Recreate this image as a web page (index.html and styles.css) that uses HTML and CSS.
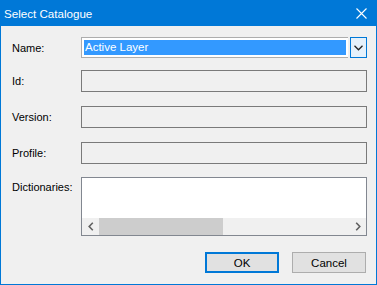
FILE: index.html
```html
<!DOCTYPE html>
<html lang="en">
<head>
    <meta charset="UTF-8">
    <title>Select Catalogue</title>
    <link rel="stylesheet" href="styles.css">
</head>
<body>
    <div class="window">
        <div class="titlebar">
            <span class="title">Select Catalogue</span>
            <svg class="close" width="11" height="11" viewBox="0 0 11 11">
                <path d="M0.5 0.5 L10.5 10.5 M10.5 0.5 L0.5 10.5" stroke="#fff" stroke-width="1.1" fill="none"/>
            </svg>
        </div>
        <div class="content">
            <div class="row row-name">
                <label>Name:</label>
                <div class="combo">
                    <div class="combo-text"><span class="selected">Active Layer</span></div>
                    <div class="combo-btn">
                        <svg width="9" height="6" viewBox="0 0 9 6">
                            <path d="M0.5 0.8 L4.5 4.8 L8.5 0.8" stroke="#222" stroke-width="1.3" fill="none"/>
                        </svg>
                    </div>
                </div>
            </div>
            <div class="row">
                <label>Id:</label>
                <div class="field"></div>
            </div>
            <div class="row">
                <label>Version:</label>
                <div class="field"></div>
            </div>
            <div class="row">
                <label>Profile:</label>
                <div class="field"></div>
            </div>
            <div class="row row-dict">
                <label>Dictionaries:</label>
                <div class="listbox">
                    <div class="list-area"></div>
                    <div class="hscroll">
                        <div class="arrow">
                            <svg width="6" height="9" viewBox="0 0 6 9">
                                <path d="M4.8 0.8 L1.2 4.5 L4.8 8.2" stroke="#606060" stroke-width="1.6" fill="none"/>
                            </svg>
                        </div>
                        <div class="track"><div class="thumb"></div></div>
                        <div class="arrow">
                            <svg width="6" height="9" viewBox="0 0 6 9">
                                <path d="M1.2 0.8 L4.8 4.5 L1.2 8.2" stroke="#606060" stroke-width="1.6" fill="none"/>
                            </svg>
                        </div>
                    </div>
                </div>
            </div>
            <div class="buttons">
                <button class="default">OK</button>
                <button>Cancel</button>
            </div>
        </div>
    </div>
</body>
</html>
```

FILE: styles.css
```css
body {
    margin: 0;
    font-family: "Liberation Sans", Arial, sans-serif;
    font-size: 11px;
    color: #000;
    background: #f0f0f0;
}
.window {
    width: 377px;
    height: 285px;
    box-sizing: border-box;
    border: 1px solid #0078d7;
    border-top: none;
    background: #f0f0f0;
}
.titlebar {
    height: 26px;
    background: #0078d7;
    display: flex;
    align-items: center;
    justify-content: space-between;
    padding: 0 10px 0 4px;
    margin: 0 -1px;
}
.title {
    color: #fff;
    font-size: 11.6px;
    margin-top: 1px;
}
.close {
    display: block;
}
.content {
    padding: 11px 9px 0 11px;
    display: flex;
    flex-direction: column;
}
.row {
    display: grid;
    grid-template-columns: 69px 1fr;
    align-items: center;
    height: 22px;
    margin-bottom: 14px;
}
.row-name {
    height: 21px;
    margin-bottom: 12px;
}
.row-dict {
    height: 59px;
    align-items: start;
    margin-top: -1px;
    margin-bottom: 16px;
}
.row-dict label {
    padding-top: 4px;
}
.combo {
    display: flex;
    height: 21px;
}
.combo-text {
    flex: 1;
    border: 1px solid #adadad;
    border-right: none;
    background: #fff;
    padding: 2px 2px 2px 2px;
    display: flex;
}
.selected {
    flex: 1;
    background: #3399ff;
    color: #fff;
    font-size: 11.5px;
    line-height: 15px;
    padding-left: 1px;
}
.combo-btn {
    width: 17px;
    box-sizing: border-box;
    border: 1px solid #0078d7;
    background: #e5f1fb;
    display: flex;
    align-items: center;
    justify-content: center;
    margin-left: 2px;
}
.field {
    height: 22px;
    box-sizing: border-box;
    border: 1px solid #7a7a7a;
    background: #f0f0f0;
}
.listbox {
    height: 59px;
    box-sizing: border-box;
    border: 1px solid #828790;
    background: #fff;
    display: flex;
    flex-direction: column;
}
.list-area {
    flex: 1;
}
.hscroll {
    height: 17px;
    background: #f0f0f0;
    display: flex;
}
.arrow {
    width: 17px;
    display: flex;
    align-items: center;
    justify-content: center;
}
.track {
    flex: 1;
    display: flex;
}
.thumb {
    width: 124px;
    background: #cdcdcd;
}
.buttons {
    display: flex;
    justify-content: flex-end;
    gap: 13px;
    padding-right: 1px;
}
button {
    width: 74px;
    height: 21px;
    box-sizing: border-box;
    border: 1px solid #adadad;
    background: #e1e1e1;
    font-family: "Liberation Sans", Arial, sans-serif;
    font-size: 11.5px;
    color: #000;
    padding: 0;
}
button.default {
    border: 2px solid #0078d7;
}
```
